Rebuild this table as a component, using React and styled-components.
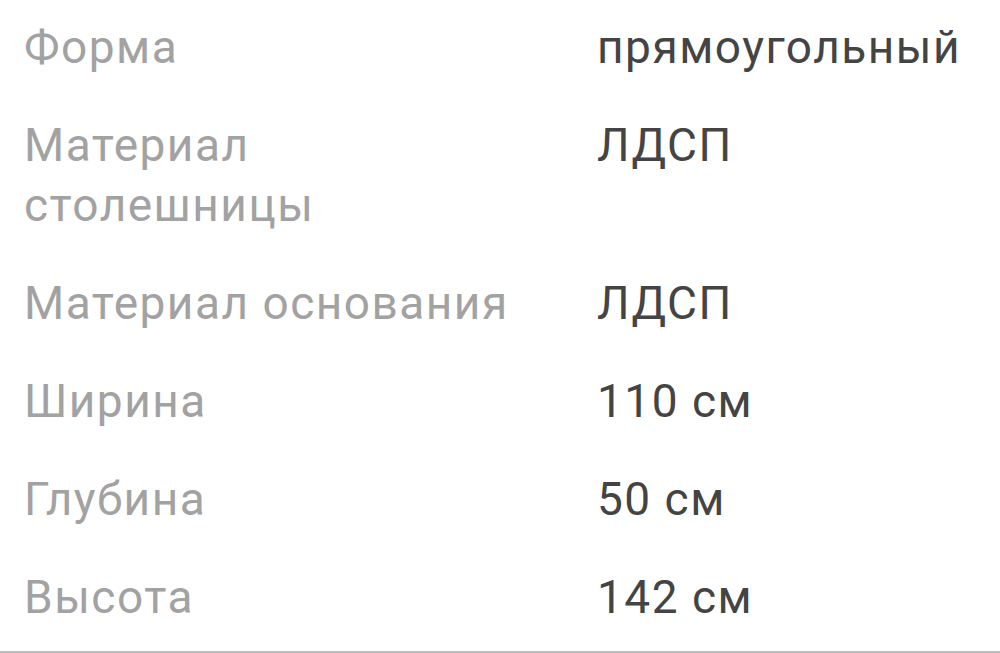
import React from "react";
import styled, { createGlobalStyle } from "styled-components";

const GlobalStyle = createGlobalStyle`
  html, body {
    margin: 0;
    padding: 0;
    background: #ffffff;
  }
  body {
    font-family: Roboto, "Noto Sans", sans-serif;
  }
`;

const Page = styled.div`
  width: 1000px;
  height: 653px;
  box-sizing: border-box;
  border-bottom: 2px solid #bdbdbd;
  overflow: hidden;
`;

const Specs = styled.dl`
  margin: 0;
  padding: 0 0 0 24px;
  display: grid;
  grid-template-columns: 573px 1fr;
`;

const Label = styled.dt`
  margin: 0;
  padding: 17px 60px 21px 0;
  font-size: 46px;
  line-height: 60px;
  letter-spacing: 1.5px;
  color: #a2a2a2;
`;

const Value = styled.dd`
  margin: 0;
  padding: 17px 0 21px 0;
  font-size: 46px;
  line-height: 60px;
  letter-spacing: 1.5px;
  color: #444444;
`;

const rows = [
  ["Форма", "прямоугольный"],
  ["Материал столешницы", "ЛДСП"],
  ["Материал основания", "ЛДСП"],
  ["Ширина", "110 см"],
  ["Глубина", "50 см"],
  ["Высота", "142 см"]
];

export default function App() {
  return (
    <Page>
      <GlobalStyle />
      <Specs>
        {rows.map(([label, value], i) => (
          <React.Fragment key={i}>
            <Label>{label}</Label>
            <Value>{value}</Value>
          </React.Fragment>
        ))}
      </Specs>
    </Page>
  );
}
